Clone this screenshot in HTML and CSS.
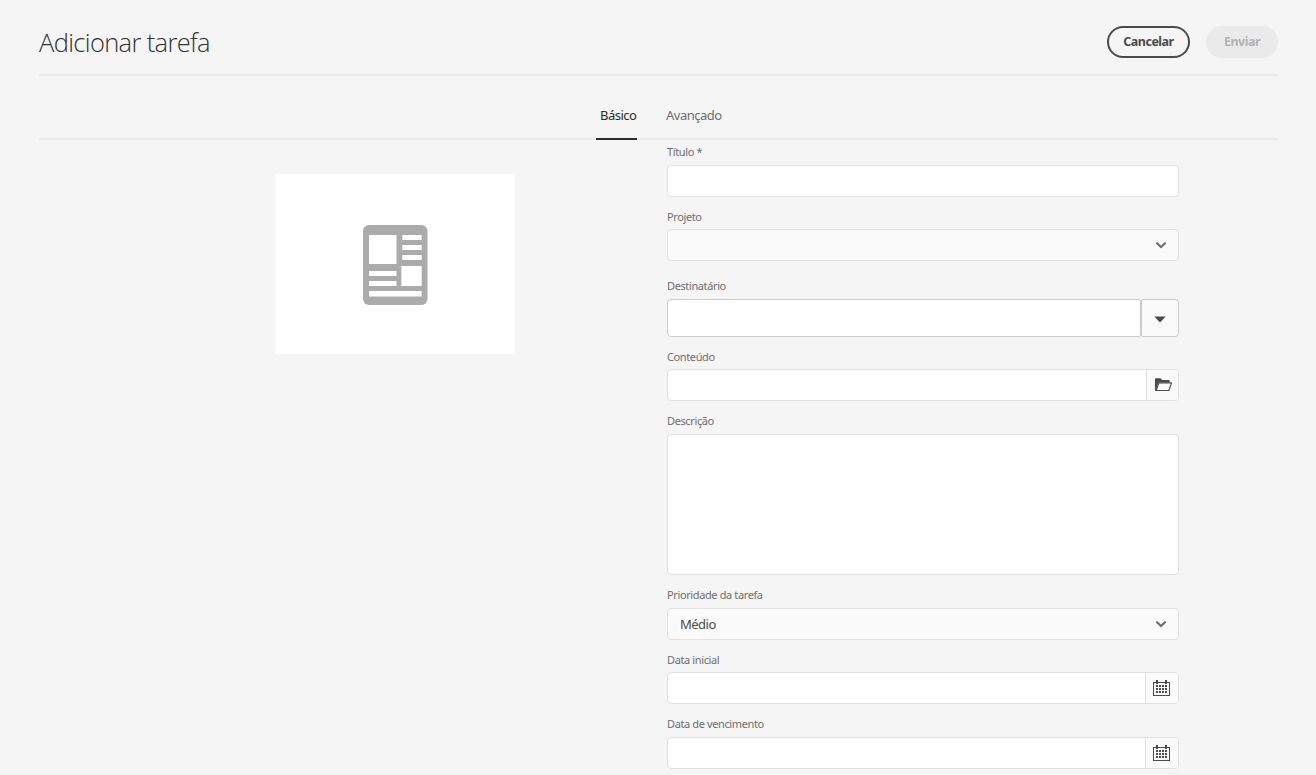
FILE: index.html
```html
<!DOCTYPE html>
<html lang="pt-BR">
<head>
<meta charset="utf-8">
<title>Adicionar tarefa</title>
<link rel="stylesheet" href="styles.css">
</head>
<body>
<header class="header">
  <h1 class="title">Adicionar tarefa</h1>
  <div class="actions">
    <button class="button cancel">Cancelar</button>
    <button class="button submit" disabled>Enviar</button>
  </div>
</header>
<nav class="tabs">
  <a class="tab active">Básico</a>
  <a class="tab">Avançado</a>
</nav>
<main class="content">
  <div class="thumbnail">
    <svg width="65" height="80" viewBox="0 0 65 80"><rect width="64.5" height="80" rx="6" fill="#ababab"/><path fill="#fff" d="M6 10h27.5v29H6zM39.3 10h19.4v5H39.3zM39.3 20h19.4v5H39.3zM39.3 30h19.4v5H39.3zM38.3 41h20.4v20H38.3zM6 46h27.5v5H6zM6 56h27.5v5H6zM6 66h52.7v5.5H6z"/></svg>
  </div>
  <form class="form">
    <div class="field">
      <label class="label">Título *</label>
      <div class="control"></div>
    </div>
    <div class="field spacious">
      <label class="label low">Projeto</label>
      <div class="control select"><svg class="chevron" width="12" height="8" viewBox="0 0 12 8"><path d="M2 2.2 6 6l4-3.8" fill="none" stroke="#6e6e6e" stroke-width="2.1" stroke-linecap="round"/></svg></div>
    </div>
    <div class="field">
      <label class="label">Destinatário</label>
      <div class="combo">
        <div class="combo-input"></div>
        <div class="combo-button"><svg width="12" height="7" viewBox="0 0 12 7"><path d="M.3.5h11.4L6 6.5z" fill="#4b4b4b"/></svg></div>
      </div>
    </div>
    <div class="field loose">
      <label class="label low">Conteúdo</label>
      <div class="control split"><div class="addon folder"><svg width="18" height="14" viewBox="0 0 18 14"><path d="M0 13V1Q0 .3.8.3h4.7L7.2 2H14q.7 0 .7.8V4.4H4.3Q3.4 4.4 3 5.4L.8 13z" fill="#4b4b4b"/><path d="M3.9 4.9h12.6L13.9 12.5H1.2z" fill="#fafafa" stroke="#4b4b4b" stroke-width="1.1" stroke-linejoin="round"/></svg></div></div>
    </div>
    <div class="field loose">
      <label class="label">Descrição</label>
      <div class="control textarea"></div>
    </div>
    <div class="field">
      <label class="label">Prioridade da tarefa</label>
      <div class="control select"><span class="value">Médio</span><svg class="chevron" width="12" height="8" viewBox="0 0 12 8"><path d="M2 2.2 6 6l4-3.8" fill="none" stroke="#6e6e6e" stroke-width="2.1" stroke-linecap="round"/></svg></div>
    </div>
    <div class="field loose">
      <label class="label low">Data inicial</label>
      <div class="control split"><div class="addon"><svg width="17" height="16" viewBox="0 0 17 16" shape-rendering="crispEdges"><path fill="#4b4b4b" fill-rule="evenodd" d="M0 2h3V0h2v2h7V0h2v2h3v14H0zM1 3v12h15V3h-2v1h-2V3H5v1H3V3z"/><path fill="#4b4b4b" d="M3 5h2v2H3zM6 5h2v2H6zM9 5h2v2H9zM12 5h2v2h-2zM3 8h2v2H3zM6 8h2v2H6zM9 8h2v2H9zM12 8h2v2h-2zM3 11h2v2H3zM6 11h2v2H6zM9 11h2v2H9zM12 11h2v2h-2z"/></svg></div></div>
    </div>
    <div class="field">
      <label class="label">Data de vencimento</label>
      <div class="control split"><div class="addon"><svg width="17" height="16" viewBox="0 0 17 16" shape-rendering="crispEdges"><path fill="#4b4b4b" fill-rule="evenodd" d="M0 2h3V0h2v2h7V0h2v2h3v14H0zM1 3v12h15V3h-2v1h-2V3H5v1H3V3z"/><path fill="#4b4b4b" d="M3 5h2v2H3zM6 5h2v2H6zM9 5h2v2H9zM12 5h2v2h-2zM3 8h2v2H3zM6 8h2v2H6zM9 8h2v2H9zM12 8h2v2h-2zM3 11h2v2H3zM6 11h2v2H6zM9 11h2v2H9zM12 11h2v2h-2z"/></svg></div></div>
    </div>
  </form>
</main>
</body>
</html>
```

FILE: styles.css
```css
* { box-sizing: border-box; }
body {
  margin: 0;
  padding: 0 38px 0 39px;
  height: 775px;
  overflow: hidden;
  background: #f5f5f5;
  color: #4b4b4b;
  font-family: "Noto Sans", "Open Sans", sans-serif;
}
svg { display: block; }
.header {
  display: flex;
  justify-content: space-between;
  align-items: flex-start;
  height: 76px;
  border-bottom: 2px solid #eaeaea;
}
.title {
  margin: 24px 0 0;
  font-family: "Open Sans", "Noto Sans", sans-serif;
  font-size: 25.5px;
  line-height: 36px;
  font-weight: 300;
  letter-spacing: -0.65px;
  color: #323232;
  white-space: nowrap;
}
.actions { display: flex; gap: 16px; padding-top: 26px; }
.button {
  height: 32px;
  padding: 0 0 1px;
  border: 0;
  border-radius: 16px;
  font: inherit;
  font-size: 12.5px;
  font-weight: 700;
  line-height: 27px;
  letter-spacing: -0.5px;
  background: none;
}
.cancel { width: 83px; border: 2px solid #4b4b4b; color: #4b4b4b; }
.submit { width: 72px; background: #eaeaea; color: #b3b3b3; }
.tabs {
  display: flex;
  gap: 25px;
  height: 64px;
  padding-left: 557px;
  border-bottom: 2px solid #eaeaea;
}
.tab {
  height: 64px;
  padding: 29px 0 0 4px;
  font-size: 13px;
  line-height: 20px;
  letter-spacing: -0.5px;
  color: #6e6e6e;
  white-space: nowrap;
}
.tab.active { width: 41px; border-bottom: 2px solid #2c2c2c; color: #2c2c2c; }
.content { display: flex; align-items: flex-start; }
.thumbnail {
  display: flex;
  align-items: center;
  justify-content: center;
  width: 240px;
  height: 180px;
  margin: 34px 152px 0 236px;
  padding-top: 2px;
  background: #fff;
}
.form { width: 512px; }
.field { margin-bottom: 7px; }
.loose { margin-bottom: 8px; }
.spacious { margin-bottom: 13px; }
.label {
  display: block;
  height: 25px;
  font-size: 11px;
  line-height: 24px;
  letter-spacing: -0.38px;
  color: #6e6e6e;
  white-space: nowrap;
}
.label.low { line-height: 26px; }
.control {
  display: flex;
  align-items: center;
  height: 32px;
  border: 1px solid #e1e1e1;
  border-radius: 4px;
  background: #fff;
}
.select { padding: 0 11px 0 12px; background: #fafafa; }
.value { font-size: 13px; letter-spacing: -0.5px; }
.chevron { margin-left: auto; }
.split { justify-content: flex-end; overflow: hidden; }
.addon {
  display: flex;
  align-items: center;
  justify-content: center;
  width: 33px;
  height: 30px;
  padding-right: 1px;
  border-left: 1px solid #e1e1e1;
  background: #fafafa;
}
.folder { width: 32px; padding: 0 0 0 3px; }
.textarea { height: 141px; }
.combo { display: flex; height: 38px; }
.combo-input {
  width: 474px;
  border: 1px solid #ccc;
  border-radius: 4px 2px 2px 4px;
  background: #fff;
}
.combo-button {
  display: flex;
  align-items: center;
  justify-content: center;
  width: 38px;
  padding-top: 2px;
  border: 1px solid #ccc;
  border-radius: 2px 4px 4px 2px;
  background: #fafafa;
}
```
